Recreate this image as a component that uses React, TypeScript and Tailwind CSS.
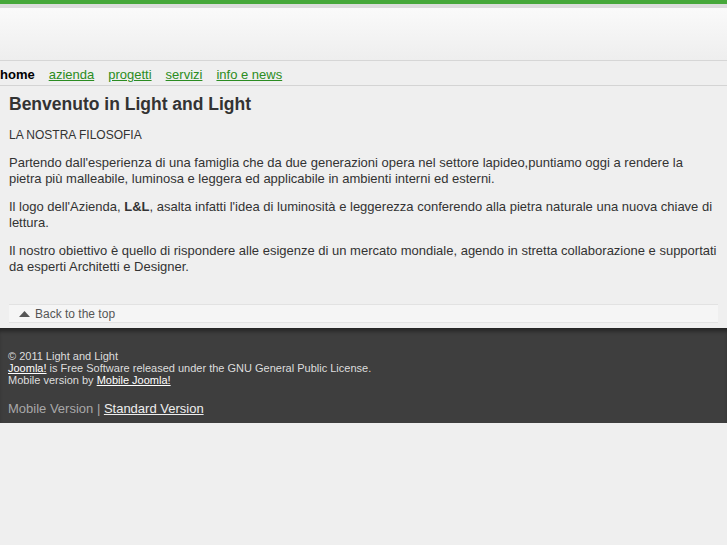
import React from 'react';

const navItems = ['azienda', 'progetti', 'servizi', 'info e news'];

export default function App() {
  return (
    <div className="min-h-[545px] bg-[#efefef] font-['Liberation_Sans',Arial,sans-serif] text-[#333]">
      {/* HEADER */}
      <div className="h-[4px] bg-[#46a83a]" />
      <div className="h-[4px] bg-[#dcdcdc]" />
      <div className="h-[53px] bg-gradient-to-b from-[#fafafa] to-[#eeeeee] border-b border-[#d6d6d6]" />

      {/* NAV */}
      <nav className="h-[25px] flex items-center gap-[14px] pt-[3px] border-b border-[#d4d4d4] text-[13px]">
        <span className="font-bold text-black">home</span>
        {navItems.map((item) => (
          <a key={item} href="#" className="text-[#2b8c22] underline">
            {item}
          </a>
        ))}
      </nav>

      {/* CONTENT */}
      <main className="px-[9px] pt-[7px]">
        <h1 className="text-[17.5px] font-bold leading-[22px] text-[#333]">Benvenuto in Light and Light</h1>
        <p className="mt-[12px] text-[12px] leading-[16px]">LA NOSTRA FILOSOFIA</p>
        <p className="mt-[12px] text-[13px] leading-[16px]">
          Partendo dall'esperienza di una famiglia che da due generazioni opera nel settore lapideo,puntiamo oggi a rendere la pietra più malleabile, luminosa e leggera ed applicabile in ambienti interni ed esterni.
        </p>
        <p className="mt-[12px] text-[13px] leading-[16px]">
          Il logo dell'Azienda, <b>L&amp;L</b>, asalta infatti l'idea di luminosità e leggerezza conferendo alla pietra naturale una nuova chiave di lettura.
        </p>
        <p className="mt-[12px] text-[13px] leading-[16px]">
          Il nostro obiettivo è quello di rispondere alle esigenze di un mercato mondiale, agendo in stretta collaborazione e supportati da esperti Architetti e Designer.
        </p>

        <div className="mt-[29px] h-[19px] flex items-center gap-[5px] pl-[10px] bg-[#f5f5f5] border-t border-b border-[#e2e2e2] text-[12px] text-[#555]">
          <svg width="11" height="6" viewBox="0 0 11 6">
            <path d="M0 6 L5.5 0 L11 6 Z" fill="#555" />
          </svg>
          Back to the top
        </div>
      </main>

      {/* FOOTER */}
      <footer className="mt-[5px] h-[95px] bg-[#3e3e3e] pt-[22px] px-[8px] text-[#dddddd] shadow-[inset_0_5px_4px_-2px_rgba(0,0,0,0.45)]">
        <div className="text-[11px] leading-[12px]">
          <div>© 2011 Light and Light</div>
          <div>
            <a href="#" className="underline text-white">Joomla!</a> is Free Software released under the GNU General Public License.
          </div>
          <div>
            Mobile version by <a href="#" className="underline text-white">Mobile Joomla!</a>
          </div>
        </div>
        <div className="mt-[13px] text-[13px] text-[#a8a8a8]">
          Mobile Version | <a href="#" className="underline text-[#eeeeee]">Standard Version</a>
        </div>
      </footer>
    </div>
  );
}
